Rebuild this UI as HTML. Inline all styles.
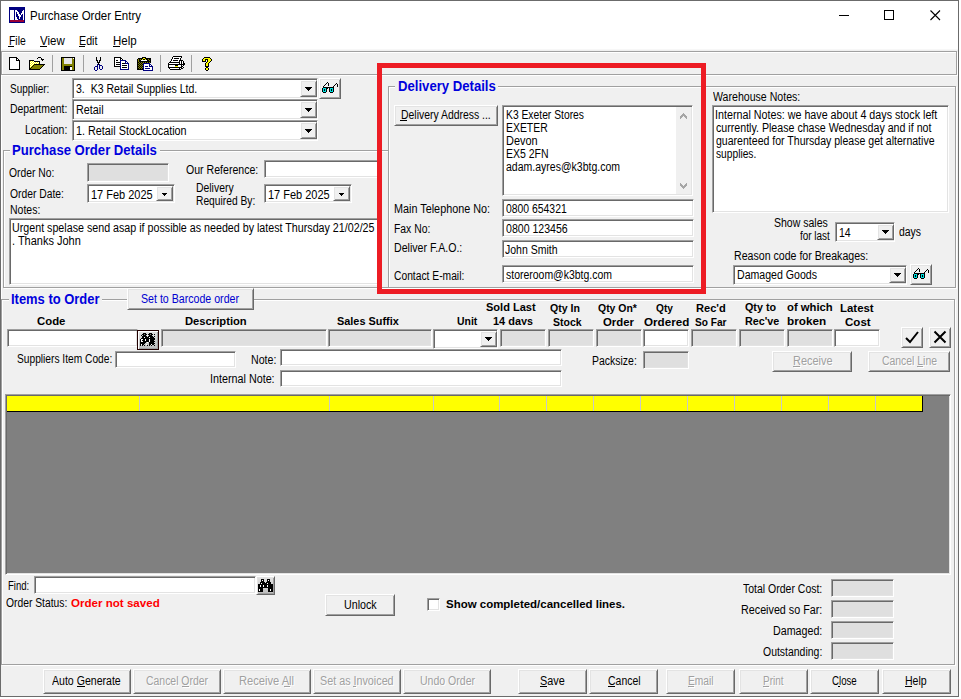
<!DOCTYPE html><html><head><meta charset='utf-8'><style>
html,body{margin:0;padding:0;width:961px;height:699px;overflow:hidden;background:#fff}
body>div,body>svg,body>span{position:absolute}
.sk{box-sizing:border-box;border:1px solid;border-color:#a0a0a0 #fff #fff #a0a0a0;box-shadow:inset 1px 1px 0 #696969,inset -1px -1px 0 #e3e3e3}
.rz{box-sizing:border-box;border:1px solid;border-color:#fff #696969 #696969 #fff;box-shadow:inset 1px 1px 0 #e3e3e3,inset -1px -1px 0 #a0a0a0}
.t{font-family:'Liberation Sans',sans-serif;white-space:pre;transform-origin:0 0}
</style></head><body><div style="left:0px;top:0px;width:961px;height:699px;background:#fff"></div>
<div style="left:0px;top:0px;width:959px;height:697px;background:#f0f0f0;border:1px solid #6b6b6b;box-sizing:border-box"></div>
<div style="left:1px;top:1px;width:957px;height:48px;background:#fff"></div>
<div style="left:1px;top:49px;width:957px;height:1px;background:#f7f7f7"></div>
<svg style="left:9px;top:7px" width="16" height="16" shape-rendering="crispEdges"><rect x="0" y="0" width="16" height="1" fill="#000080"/><rect x="0" y="1" width="16" height="1" fill="#000080"/><rect x="0" y="2" width="16" height="1" fill="#000080"/><rect x="0" y="3" width="1" height="1" fill="#000080"/><rect x="1" y="3" width="4" height="1" fill="#fff"/><rect x="5" y="3" width="1" height="1" fill="#000080"/><rect x="6" y="3" width="2" height="1" fill="#fff"/><rect x="8" y="3" width="6" height="1" fill="#000080"/><rect x="14" y="3" width="1" height="1" fill="#fff"/><rect x="15" y="3" width="1" height="1" fill="#000080"/><rect x="0" y="4" width="1" height="1" fill="#000080"/><rect x="1" y="4" width="4" height="1" fill="#fff"/><rect x="5" y="4" width="1" height="1" fill="#000080"/><rect x="6" y="4" width="3" height="1" fill="#fff"/><rect x="9" y="4" width="4" height="1" fill="#000080"/><rect x="13" y="4" width="2" height="1" fill="#fff"/><rect x="15" y="4" width="1" height="1" fill="#000080"/><rect x="0" y="5" width="1" height="1" fill="#000080"/><rect x="1" y="5" width="4" height="1" fill="#fff"/><rect x="5" y="5" width="1" height="1" fill="#000080"/><rect x="6" y="5" width="1" height="1" fill="#fff"/><rect x="7" y="5" width="1" height="1" fill="#000080"/><rect x="8" y="5" width="2" height="1" fill="#fff"/><rect x="10" y="5" width="3" height="1" fill="#000080"/><rect x="13" y="5" width="2" height="1" fill="#fff"/><rect x="15" y="5" width="1" height="1" fill="#000080"/><rect x="0" y="6" width="1" height="1" fill="#000080"/><rect x="1" y="6" width="4" height="1" fill="#fff"/><rect x="5" y="6" width="1" height="1" fill="#000080"/><rect x="6" y="6" width="1" height="1" fill="#fff"/><rect x="7" y="6" width="1" height="1" fill="#000080"/><rect x="8" y="6" width="2" height="1" fill="#fff"/><rect x="10" y="6" width="2" height="1" fill="#000080"/><rect x="12" y="6" width="3" height="1" fill="#fff"/><rect x="15" y="6" width="1" height="1" fill="#000080"/><rect x="0" y="7" width="1" height="1" fill="#000080"/><rect x="1" y="7" width="4" height="1" fill="#fff"/><rect x="5" y="7" width="1" height="1" fill="#000080"/><rect x="6" y="7" width="1" height="1" fill="#fff"/><rect x="7" y="7" width="2" height="1" fill="#000080"/><rect x="9" y="7" width="2" height="1" fill="#fff"/><rect x="11" y="7" width="1" height="1" fill="#000080"/><rect x="12" y="7" width="1" height="1" fill="#fff"/><rect x="13" y="7" width="1" height="1" fill="#000080"/><rect x="14" y="7" width="1" height="1" fill="#fff"/><rect x="15" y="7" width="1" height="1" fill="#000080"/><rect x="0" y="8" width="1" height="1" fill="#000080"/><rect x="1" y="8" width="4" height="1" fill="#fff"/><rect x="5" y="8" width="1" height="1" fill="#000080"/><rect x="6" y="8" width="1" height="1" fill="#fff"/><rect x="7" y="8" width="2" height="1" fill="#000080"/><rect x="9" y="8" width="3" height="1" fill="#fff"/><rect x="12" y="8" width="2" height="1" fill="#000080"/><rect x="14" y="8" width="1" height="1" fill="#fff"/><rect x="15" y="8" width="1" height="1" fill="#000080"/><rect x="0" y="9" width="1" height="1" fill="#000080"/><rect x="1" y="9" width="4" height="1" fill="#fff"/><rect x="5" y="9" width="1" height="1" fill="#000080"/><rect x="6" y="9" width="1" height="1" fill="#fff"/><rect x="7" y="9" width="3" height="1" fill="#000080"/><rect x="10" y="9" width="2" height="1" fill="#fff"/><rect x="12" y="9" width="2" height="1" fill="#000080"/><rect x="14" y="9" width="1" height="1" fill="#fff"/><rect x="15" y="9" width="1" height="1" fill="#000080"/><rect x="0" y="10" width="1" height="1" fill="#000080"/><rect x="1" y="10" width="4" height="1" fill="#fff"/><rect x="5" y="10" width="1" height="1" fill="#000080"/><rect x="6" y="10" width="2" height="1" fill="#fff"/><rect x="8" y="10" width="2" height="1" fill="#000080"/><rect x="10" y="10" width="1" height="1" fill="#fff"/><rect x="11" y="10" width="3" height="1" fill="#000080"/><rect x="14" y="10" width="1" height="1" fill="#fff"/><rect x="15" y="10" width="1" height="1" fill="#000080"/><rect x="0" y="11" width="1" height="1" fill="#000080"/><rect x="1" y="11" width="4" height="1" fill="#fff"/><rect x="5" y="11" width="1" height="1" fill="#000080"/><rect x="6" y="11" width="2" height="1" fill="#fff"/><rect x="8" y="11" width="2" height="1" fill="#000080"/><rect x="10" y="11" width="1" height="1" fill="#fff"/><rect x="11" y="11" width="3" height="1" fill="#000080"/><rect x="14" y="11" width="1" height="1" fill="#fff"/><rect x="15" y="11" width="1" height="1" fill="#000080"/><rect x="0" y="12" width="1" height="1" fill="#000080"/><rect x="1" y="12" width="4" height="1" fill="#fff"/><rect x="5" y="12" width="1" height="1" fill="#000080"/><rect x="6" y="12" width="3" height="1" fill="#fff"/><rect x="9" y="12" width="5" height="1" fill="#000080"/><rect x="14" y="12" width="1" height="1" fill="#fff"/><rect x="15" y="12" width="1" height="1" fill="#000080"/><rect x="0" y="13" width="1" height="1" fill="#000080"/><rect x="1" y="13" width="14" height="1" fill="#9a0036"/><rect x="15" y="13" width="1" height="1" fill="#000080"/><rect x="0" y="14" width="1" height="1" fill="#000080"/><rect x="1" y="14" width="14" height="1" fill="#9a0036"/><rect x="15" y="14" width="1" height="1" fill="#000080"/><rect x="0" y="15" width="16" height="1" fill="#000080"/></svg>
<span class="t" style="top:10px;font-size:12px;line-height:12px;color:#000;left:30.00px;transform:scaleX(0.9565);">Purchase Order Entry</span>
<div style="left:839px;top:15px;width:10px;height:1px;background:#000"></div>
<div style="left:884px;top:10px;width:10px;height:10px;border:1px solid #000;box-sizing:border-box"></div>
<svg style="left:930px;top:10px" width="11" height="11"><path d="M0.5 0.5L10 10M10 0.5L0.5 10" stroke="#000" stroke-width="1.1"/></svg>
<span class="t" style="top:35px;font-size:12px;line-height:12px;color:#000;left:9.00px;transform:scaleX(0.8646);">File</span>
<div style="left:8px;top:46px;width:6px;height:1px;background:#000"></div>
<span class="t" style="top:35px;font-size:12px;line-height:12px;color:#000;left:40.00px;transform:scaleX(0.9569);">View</span>
<div style="left:40px;top:46px;width:7px;height:1px;background:#000"></div>
<span class="t" style="top:35px;font-size:12px;line-height:12px;color:#000;left:79.00px;transform:scaleX(0.8902);">Edit</span>
<div style="left:79px;top:46px;width:6px;height:1px;background:#000"></div>
<span class="t" style="top:35px;font-size:12px;line-height:12px;color:#000;left:113.00px;transform:scaleX(0.9598);">Help</span>
<div style="left:113px;top:46px;width:7px;height:1px;background:#000"></div>
<div style="left:2px;top:52px;width:956px;height:24px;border:1px solid #fff;box-sizing:border-box"></div>
<div style="left:1px;top:51px;width:956px;height:24px;border:1px solid #a0a0a0;box-sizing:border-box"></div>
<div style="left:52px;top:55px;width:1px;height:17px;background:#a0a0a0"></div>
<div style="left:83px;top:55px;width:1px;height:17px;background:#a0a0a0"></div>
<div style="left:160px;top:55px;width:1px;height:17px;background:#a0a0a0"></div>
<div style="left:191px;top:55px;width:1px;height:17px;background:#a0a0a0"></div>
<svg style="left:9px;top:57px" width="11" height="13" shape-rendering="crispEdges"><rect x="0" y="0" width="8" height="1" fill="#000"/><rect x="0" y="1" width="1" height="1" fill="#000"/><rect x="1" y="1" width="6" height="1" fill="#fff"/><rect x="7" y="1" width="2" height="1" fill="#000"/><rect x="0" y="2" width="1" height="1" fill="#000"/><rect x="1" y="2" width="6" height="1" fill="#fff"/><rect x="7" y="2" width="1" height="1" fill="#000"/><rect x="8" y="2" width="1" height="1" fill="#fff"/><rect x="9" y="2" width="1" height="1" fill="#000"/><rect x="0" y="3" width="1" height="1" fill="#000"/><rect x="1" y="3" width="6" height="1" fill="#fff"/><rect x="7" y="3" width="4" height="1" fill="#000"/><rect x="0" y="4" width="1" height="1" fill="#000"/><rect x="1" y="4" width="9" height="1" fill="#fff"/><rect x="10" y="4" width="1" height="1" fill="#000"/><rect x="0" y="5" width="1" height="1" fill="#000"/><rect x="1" y="5" width="9" height="1" fill="#fff"/><rect x="10" y="5" width="1" height="1" fill="#000"/><rect x="0" y="6" width="1" height="1" fill="#000"/><rect x="1" y="6" width="9" height="1" fill="#fff"/><rect x="10" y="6" width="1" height="1" fill="#000"/><rect x="0" y="7" width="1" height="1" fill="#000"/><rect x="1" y="7" width="9" height="1" fill="#fff"/><rect x="10" y="7" width="1" height="1" fill="#000"/><rect x="0" y="8" width="1" height="1" fill="#000"/><rect x="1" y="8" width="9" height="1" fill="#fff"/><rect x="10" y="8" width="1" height="1" fill="#000"/><rect x="0" y="9" width="1" height="1" fill="#000"/><rect x="1" y="9" width="9" height="1" fill="#fff"/><rect x="10" y="9" width="1" height="1" fill="#000"/><rect x="0" y="10" width="1" height="1" fill="#000"/><rect x="1" y="10" width="9" height="1" fill="#fff"/><rect x="10" y="10" width="1" height="1" fill="#000"/><rect x="0" y="11" width="1" height="1" fill="#000"/><rect x="1" y="11" width="9" height="1" fill="#fff"/><rect x="10" y="11" width="1" height="1" fill="#000"/><rect x="0" y="12" width="11" height="1" fill="#000"/></svg><svg style="left:29px;top:57px" width="16" height="13" shape-rendering="crispEdges"><rect x="9" y="0" width="3" height="1" fill="#000"/><rect x="8" y="1" width="1" height="1" fill="#000"/><rect x="12" y="1" width="1" height="1" fill="#000"/><rect x="12" y="2" width="3" height="1" fill="#000"/><rect x="0" y="3" width="5" height="1" fill="#000"/><rect x="13" y="3" width="1" height="1" fill="#000"/><rect x="0" y="4" width="1" height="1" fill="#000"/><rect x="1" y="4" width="1" height="1" fill="#ffff00"/><rect x="2" y="4" width="1" height="1" fill="#fff"/><rect x="3" y="4" width="1" height="1" fill="#ffff00"/><rect x="4" y="4" width="1" height="1" fill="#fff"/><rect x="5" y="4" width="6" height="1" fill="#000"/><rect x="0" y="5" width="1" height="1" fill="#000"/><rect x="1" y="5" width="1" height="1" fill="#fff"/><rect x="2" y="5" width="1" height="1" fill="#ffff00"/><rect x="3" y="5" width="1" height="1" fill="#fff"/><rect x="4" y="5" width="1" height="1" fill="#ffff00"/><rect x="5" y="5" width="1" height="1" fill="#fff"/><rect x="6" y="5" width="1" height="1" fill="#ffff00"/><rect x="7" y="5" width="1" height="1" fill="#fff"/><rect x="8" y="5" width="1" height="1" fill="#ffff00"/><rect x="9" y="5" width="1" height="1" fill="#fff"/><rect x="10" y="5" width="1" height="1" fill="#000"/><rect x="0" y="6" width="1" height="1" fill="#000"/><rect x="1" y="6" width="1" height="1" fill="#ffff00"/><rect x="2" y="6" width="1" height="1" fill="#fff"/><rect x="3" y="6" width="1" height="1" fill="#ffff00"/><rect x="4" y="6" width="1" height="1" fill="#fff"/><rect x="5" y="6" width="1" height="1" fill="#ffff00"/><rect x="6" y="6" width="1" height="1" fill="#fff"/><rect x="7" y="6" width="1" height="1" fill="#ffff00"/><rect x="8" y="6" width="1" height="1" fill="#fff"/><rect x="9" y="6" width="1" height="1" fill="#ffff00"/><rect x="10" y="6" width="1" height="1" fill="#000"/><rect x="0" y="7" width="1" height="1" fill="#000"/><rect x="1" y="7" width="1" height="1" fill="#fff"/><rect x="2" y="7" width="1" height="1" fill="#ffff00"/><rect x="3" y="7" width="1" height="1" fill="#fff"/><rect x="4" y="7" width="1" height="1" fill="#ffff00"/><rect x="5" y="7" width="11" height="1" fill="#000"/><rect x="0" y="8" width="1" height="1" fill="#000"/><rect x="1" y="8" width="1" height="1" fill="#ffff00"/><rect x="2" y="8" width="1" height="1" fill="#fff"/><rect x="3" y="8" width="1" height="1" fill="#ffff00"/><rect x="4" y="8" width="1" height="1" fill="#000"/><rect x="5" y="8" width="9" height="1" fill="#808000"/><rect x="14" y="8" width="1" height="1" fill="#000"/><rect x="0" y="9" width="1" height="1" fill="#000"/><rect x="1" y="9" width="1" height="1" fill="#fff"/><rect x="2" y="9" width="1" height="1" fill="#ffff00"/><rect x="3" y="9" width="1" height="1" fill="#000"/><rect x="4" y="9" width="9" height="1" fill="#808000"/><rect x="13" y="9" width="1" height="1" fill="#000"/><rect x="0" y="10" width="1" height="1" fill="#000"/><rect x="1" y="10" width="1" height="1" fill="#ffff00"/><rect x="2" y="10" width="1" height="1" fill="#000"/><rect x="3" y="10" width="9" height="1" fill="#808000"/><rect x="12" y="10" width="1" height="1" fill="#000"/><rect x="0" y="11" width="2" height="1" fill="#000"/><rect x="2" y="11" width="9" height="1" fill="#808000"/><rect x="11" y="11" width="1" height="1" fill="#000"/><rect x="0" y="12" width="11" height="1" fill="#000"/></svg><svg style="left:61px;top:57px" width="14" height="14" shape-rendering="crispEdges"><rect x="0" y="0" width="14" height="1" fill="#000"/><rect x="0" y="1" width="1" height="1" fill="#000"/><rect x="1" y="1" width="2" height="1" fill="#808000"/><rect x="3" y="1" width="8" height="1" fill="#e6e6e6"/><rect x="11" y="1" width="1" height="1" fill="#808000"/><rect x="12" y="1" width="1" height="1" fill="#fff"/><rect x="13" y="1" width="1" height="1" fill="#000"/><rect x="0" y="2" width="1" height="1" fill="#000"/><rect x="1" y="2" width="2" height="1" fill="#808000"/><rect x="3" y="2" width="8" height="1" fill="#e6e6e6"/><rect x="11" y="2" width="2" height="1" fill="#808000"/><rect x="13" y="2" width="1" height="1" fill="#000"/><rect x="0" y="3" width="1" height="1" fill="#000"/><rect x="1" y="3" width="2" height="1" fill="#808000"/><rect x="3" y="3" width="8" height="1" fill="#e6e6e6"/><rect x="11" y="3" width="2" height="1" fill="#808000"/><rect x="13" y="3" width="1" height="1" fill="#000"/><rect x="0" y="4" width="1" height="1" fill="#000"/><rect x="1" y="4" width="2" height="1" fill="#808000"/><rect x="3" y="4" width="8" height="1" fill="#e6e6e6"/><rect x="11" y="4" width="2" height="1" fill="#808000"/><rect x="13" y="4" width="1" height="1" fill="#000"/><rect x="0" y="5" width="1" height="1" fill="#000"/><rect x="1" y="5" width="2" height="1" fill="#808000"/><rect x="3" y="5" width="8" height="1" fill="#e6e6e6"/><rect x="11" y="5" width="2" height="1" fill="#808000"/><rect x="13" y="5" width="1" height="1" fill="#000"/><rect x="0" y="6" width="1" height="1" fill="#000"/><rect x="1" y="6" width="2" height="1" fill="#808000"/><rect x="3" y="6" width="8" height="1" fill="#e6e6e6"/><rect x="11" y="6" width="2" height="1" fill="#808000"/><rect x="13" y="6" width="1" height="1" fill="#000"/><rect x="0" y="7" width="1" height="1" fill="#000"/><rect x="1" y="7" width="12" height="1" fill="#808000"/><rect x="13" y="7" width="1" height="1" fill="#000"/><rect x="0" y="8" width="1" height="1" fill="#000"/><rect x="1" y="8" width="12" height="1" fill="#808000"/><rect x="13" y="8" width="1" height="1" fill="#000"/><rect x="0" y="9" width="1" height="1" fill="#000"/><rect x="1" y="9" width="2" height="1" fill="#808000"/><rect x="3" y="9" width="8" height="1" fill="#000"/><rect x="11" y="9" width="2" height="1" fill="#808000"/><rect x="13" y="9" width="1" height="1" fill="#000"/><rect x="0" y="10" width="1" height="1" fill="#000"/><rect x="1" y="10" width="2" height="1" fill="#808000"/><rect x="3" y="10" width="6" height="1" fill="#000"/><rect x="9" y="10" width="2" height="1" fill="#fff"/><rect x="11" y="10" width="2" height="1" fill="#808000"/><rect x="13" y="10" width="1" height="1" fill="#000"/><rect x="0" y="11" width="1" height="1" fill="#000"/><rect x="1" y="11" width="2" height="1" fill="#808000"/><rect x="3" y="11" width="6" height="1" fill="#000"/><rect x="9" y="11" width="2" height="1" fill="#fff"/><rect x="11" y="11" width="2" height="1" fill="#808000"/><rect x="13" y="11" width="1" height="1" fill="#000"/><rect x="0" y="12" width="1" height="1" fill="#000"/><rect x="1" y="12" width="2" height="1" fill="#808000"/><rect x="3" y="12" width="6" height="1" fill="#000"/><rect x="9" y="12" width="2" height="1" fill="#fff"/><rect x="11" y="12" width="2" height="1" fill="#808000"/><rect x="13" y="12" width="1" height="1" fill="#000"/><rect x="0" y="13" width="14" height="1" fill="#000"/></svg><svg style="left:94px;top:57px" width="9" height="14" shape-rendering="crispEdges"><rect x="2" y="0" width="1" height="1" fill="#000"/><rect x="6" y="0" width="1" height="1" fill="#000"/><rect x="2" y="1" width="1" height="1" fill="#000"/><rect x="6" y="1" width="1" height="1" fill="#000"/><rect x="2" y="2" width="1" height="1" fill="#000"/><rect x="6" y="2" width="1" height="1" fill="#000"/><rect x="2" y="3" width="2" height="1" fill="#000"/><rect x="5" y="3" width="2" height="1" fill="#000"/><rect x="3" y="4" width="1" height="1" fill="#000"/><rect x="5" y="4" width="1" height="1" fill="#000"/><rect x="3" y="5" width="3" height="1" fill="#000"/><rect x="4" y="6" width="1" height="1" fill="#000"/><rect x="3" y="7" width="1" height="1" fill="#000080"/><rect x="4" y="7" width="1" height="1" fill="#000"/><rect x="5" y="7" width="1" height="1" fill="#000080"/><rect x="3" y="8" width="1" height="1" fill="#000080"/><rect x="5" y="8" width="3" height="1" fill="#000080"/><rect x="1" y="9" width="3" height="1" fill="#000080"/><rect x="5" y="9" width="1" height="1" fill="#000080"/><rect x="8" y="9" width="1" height="1" fill="#000080"/><rect x="0" y="10" width="1" height="1" fill="#000080"/><rect x="3" y="10" width="1" height="1" fill="#000080"/><rect x="5" y="10" width="1" height="1" fill="#000080"/><rect x="8" y="10" width="1" height="1" fill="#000080"/><rect x="0" y="11" width="1" height="1" fill="#000080"/><rect x="3" y="11" width="1" height="1" fill="#000080"/><rect x="5" y="11" width="1" height="1" fill="#000080"/><rect x="8" y="11" width="1" height="1" fill="#000080"/><rect x="0" y="12" width="1" height="1" fill="#000080"/><rect x="3" y="12" width="1" height="1" fill="#000080"/><rect x="6" y="12" width="2" height="1" fill="#000080"/><rect x="1" y="13" width="2" height="1" fill="#000080"/></svg><svg style="left:114px;top:57px" width="16" height="13" shape-rendering="crispEdges"><rect x="0" y="0" width="7" height="1" fill="#000"/><rect x="0" y="1" width="1" height="1" fill="#000"/><rect x="1" y="1" width="5" height="1" fill="#fff"/><rect x="6" y="1" width="2" height="1" fill="#000"/><rect x="0" y="2" width="1" height="1" fill="#000"/><rect x="1" y="2" width="5" height="1" fill="#fff"/><rect x="6" y="2" width="1" height="1" fill="#000"/><rect x="7" y="2" width="1" height="1" fill="#fff"/><rect x="8" y="2" width="1" height="1" fill="#000"/><rect x="0" y="3" width="1" height="1" fill="#000"/><rect x="1" y="3" width="1" height="1" fill="#fff"/><rect x="2" y="3" width="2" height="1" fill="#000"/><rect x="4" y="3" width="2" height="1" fill="#fff"/><rect x="6" y="3" width="6" height="1" fill="#000080"/><rect x="0" y="4" width="1" height="1" fill="#000"/><rect x="1" y="4" width="5" height="1" fill="#fff"/><rect x="6" y="4" width="1" height="1" fill="#000080"/><rect x="7" y="4" width="4" height="1" fill="#fff"/><rect x="11" y="4" width="2" height="1" fill="#000080"/><rect x="0" y="5" width="1" height="1" fill="#000"/><rect x="1" y="5" width="1" height="1" fill="#fff"/><rect x="2" y="5" width="4" height="1" fill="#000"/><rect x="6" y="5" width="1" height="1" fill="#000080"/><rect x="7" y="5" width="4" height="1" fill="#fff"/><rect x="11" y="5" width="1" height="1" fill="#000080"/><rect x="12" y="5" width="1" height="1" fill="#fff"/><rect x="13" y="5" width="1" height="1" fill="#000080"/><rect x="0" y="6" width="1" height="1" fill="#000"/><rect x="1" y="6" width="5" height="1" fill="#fff"/><rect x="6" y="6" width="1" height="1" fill="#000080"/><rect x="7" y="6" width="1" height="1" fill="#fff"/><rect x="8" y="6" width="3" height="1" fill="#000"/><rect x="11" y="6" width="4" height="1" fill="#000080"/><rect x="0" y="7" width="1" height="1" fill="#000"/><rect x="1" y="7" width="1" height="1" fill="#fff"/><rect x="2" y="7" width="4" height="1" fill="#000"/><rect x="6" y="7" width="1" height="1" fill="#000080"/><rect x="7" y="7" width="7" height="1" fill="#fff"/><rect x="14" y="7" width="1" height="1" fill="#000080"/><rect x="0" y="8" width="1" height="1" fill="#000"/><rect x="1" y="8" width="5" height="1" fill="#fff"/><rect x="6" y="8" width="1" height="1" fill="#000080"/><rect x="7" y="8" width="1" height="1" fill="#fff"/><rect x="8" y="8" width="5" height="1" fill="#000"/><rect x="13" y="8" width="1" height="1" fill="#fff"/><rect x="14" y="8" width="1" height="1" fill="#000080"/><rect x="0" y="9" width="6" height="1" fill="#000"/><rect x="6" y="9" width="1" height="1" fill="#000080"/><rect x="7" y="9" width="7" height="1" fill="#fff"/><rect x="14" y="9" width="1" height="1" fill="#000080"/><rect x="6" y="10" width="1" height="1" fill="#000080"/><rect x="7" y="10" width="1" height="1" fill="#fff"/><rect x="8" y="10" width="5" height="1" fill="#000"/><rect x="13" y="10" width="1" height="1" fill="#fff"/><rect x="14" y="10" width="1" height="1" fill="#000080"/><rect x="6" y="11" width="1" height="1" fill="#000080"/><rect x="7" y="11" width="7" height="1" fill="#fff"/><rect x="14" y="11" width="1" height="1" fill="#000080"/><rect x="6" y="12" width="9" height="1" fill="#000080"/></svg><svg style="left:137px;top:57px" width="16" height="14" shape-rendering="crispEdges"><rect x="5" y="0" width="4" height="1" fill="#000"/><rect x="1" y="1" width="5" height="1" fill="#000"/><rect x="6" y="1" width="2" height="1" fill="#ffff00"/><rect x="8" y="1" width="6" height="1" fill="#000"/><rect x="0" y="2" width="1" height="1" fill="#000"/><rect x="1" y="2" width="1" height="1" fill="#808000"/><rect x="2" y="2" width="1" height="1" fill="#000"/><rect x="3" y="2" width="1" height="1" fill="#808000"/><rect x="4" y="2" width="1" height="1" fill="#000"/><rect x="5" y="2" width="1" height="1" fill="#ffff00"/><rect x="6" y="2" width="2" height="1" fill="#000"/><rect x="8" y="2" width="1" height="1" fill="#ffff00"/><rect x="9" y="2" width="2" height="1" fill="#000"/><rect x="11" y="2" width="1" height="1" fill="#808000"/><rect x="12" y="2" width="2" height="1" fill="#000"/><rect x="0" y="3" width="1" height="1" fill="#000"/><rect x="1" y="3" width="1" height="1" fill="#808000"/><rect x="2" y="3" width="2" height="1" fill="#000"/><rect x="4" y="3" width="6" height="1" fill="#fff"/><rect x="10" y="3" width="2" height="1" fill="#000"/><rect x="12" y="3" width="1" height="1" fill="#808000"/><rect x="13" y="3" width="1" height="1" fill="#000"/><rect x="0" y="4" width="1" height="1" fill="#000"/><rect x="1" y="4" width="1" height="1" fill="#808000"/><rect x="2" y="4" width="12" height="1" fill="#000"/><rect x="0" y="5" width="2" height="1" fill="#000"/><rect x="2" y="5" width="1" height="1" fill="#808000"/><rect x="3" y="5" width="1" height="1" fill="#000"/><rect x="4" y="5" width="1" height="1" fill="#808000"/><rect x="5" y="5" width="1" height="1" fill="#000"/><rect x="6" y="5" width="1" height="1" fill="#808000"/><rect x="7" y="5" width="1" height="1" fill="#000"/><rect x="8" y="5" width="1" height="1" fill="#808000"/><rect x="9" y="5" width="1" height="1" fill="#000"/><rect x="10" y="5" width="1" height="1" fill="#808000"/><rect x="11" y="5" width="1" height="1" fill="#000"/><rect x="12" y="5" width="1" height="1" fill="#808000"/><rect x="13" y="5" width="1" height="1" fill="#000"/><rect x="0" y="6" width="1" height="1" fill="#000"/><rect x="1" y="6" width="1" height="1" fill="#808000"/><rect x="2" y="6" width="1" height="1" fill="#000"/><rect x="3" y="6" width="1" height="1" fill="#808000"/><rect x="4" y="6" width="1" height="1" fill="#000"/><rect x="5" y="6" width="1" height="1" fill="#808000"/><rect x="6" y="6" width="7" height="1" fill="#000080"/><rect x="0" y="7" width="2" height="1" fill="#000"/><rect x="2" y="7" width="1" height="1" fill="#808000"/><rect x="3" y="7" width="1" height="1" fill="#000"/><rect x="4" y="7" width="1" height="1" fill="#808000"/><rect x="5" y="7" width="1" height="1" fill="#000"/><rect x="6" y="7" width="1" height="1" fill="#000080"/><rect x="7" y="7" width="5" height="1" fill="#fff"/><rect x="12" y="7" width="2" height="1" fill="#000080"/><rect x="0" y="8" width="1" height="1" fill="#000"/><rect x="1" y="8" width="1" height="1" fill="#808000"/><rect x="2" y="8" width="1" height="1" fill="#000"/><rect x="3" y="8" width="1" height="1" fill="#808000"/><rect x="4" y="8" width="1" height="1" fill="#000"/><rect x="5" y="8" width="1" height="1" fill="#808000"/><rect x="6" y="8" width="1" height="1" fill="#000080"/><rect x="7" y="8" width="5" height="1" fill="#fff"/><rect x="12" y="8" width="1" height="1" fill="#000080"/><rect x="13" y="8" width="1" height="1" fill="#fff"/><rect x="14" y="8" width="1" height="1" fill="#000080"/><rect x="0" y="9" width="2" height="1" fill="#000"/><rect x="2" y="9" width="1" height="1" fill="#808000"/><rect x="3" y="9" width="1" height="1" fill="#000"/><rect x="4" y="9" width="1" height="1" fill="#808000"/><rect x="5" y="9" width="1" height="1" fill="#000"/><rect x="6" y="9" width="1" height="1" fill="#000080"/><rect x="7" y="9" width="1" height="1" fill="#fff"/><rect x="8" y="9" width="3" height="1" fill="#000080"/><rect x="11" y="9" width="1" height="1" fill="#fff"/><rect x="12" y="9" width="4" height="1" fill="#000080"/><rect x="0" y="10" width="1" height="1" fill="#000"/><rect x="1" y="10" width="1" height="1" fill="#808000"/><rect x="2" y="10" width="1" height="1" fill="#000"/><rect x="3" y="10" width="1" height="1" fill="#808000"/><rect x="4" y="10" width="1" height="1" fill="#000"/><rect x="5" y="10" width="1" height="1" fill="#808000"/><rect x="6" y="10" width="1" height="1" fill="#000080"/><rect x="7" y="10" width="8" height="1" fill="#fff"/><rect x="15" y="10" width="1" height="1" fill="#000080"/><rect x="0" y="11" width="2" height="1" fill="#000"/><rect x="2" y="11" width="1" height="1" fill="#808000"/><rect x="3" y="11" width="1" height="1" fill="#000"/><rect x="4" y="11" width="1" height="1" fill="#808000"/><rect x="5" y="11" width="1" height="1" fill="#000"/><rect x="6" y="11" width="1" height="1" fill="#000080"/><rect x="7" y="11" width="1" height="1" fill="#fff"/><rect x="8" y="11" width="5" height="1" fill="#000080"/><rect x="13" y="11" width="2" height="1" fill="#fff"/><rect x="15" y="11" width="1" height="1" fill="#000080"/><rect x="0" y="12" width="6" height="1" fill="#000"/><rect x="6" y="12" width="1" height="1" fill="#000080"/><rect x="7" y="12" width="8" height="1" fill="#fff"/><rect x="15" y="12" width="1" height="1" fill="#000080"/><rect x="6" y="13" width="10" height="1" fill="#000080"/></svg><svg style="left:168px;top:56px" width="17" height="14" shape-rendering="crispEdges"><rect x="5" y="0" width="9" height="1" fill="#000"/><rect x="4" y="1" width="1" height="1" fill="#000"/><rect x="5" y="1" width="8" height="1" fill="#fff"/><rect x="13" y="1" width="1" height="1" fill="#000"/><rect x="4" y="2" width="1" height="1" fill="#000"/><rect x="5" y="2" width="1" height="1" fill="#fff"/><rect x="6" y="2" width="5" height="1" fill="#000"/><rect x="11" y="2" width="1" height="1" fill="#fff"/><rect x="12" y="2" width="1" height="1" fill="#000"/><rect x="3" y="3" width="1" height="1" fill="#000"/><rect x="4" y="3" width="8" height="1" fill="#fff"/><rect x="12" y="3" width="1" height="1" fill="#000"/><rect x="3" y="4" width="1" height="1" fill="#000"/><rect x="4" y="4" width="1" height="1" fill="#fff"/><rect x="5" y="4" width="5" height="1" fill="#000"/><rect x="10" y="4" width="1" height="1" fill="#fff"/><rect x="11" y="4" width="4" height="1" fill="#000"/><rect x="2" y="5" width="1" height="1" fill="#000"/><rect x="3" y="5" width="8" height="1" fill="#fff"/><rect x="11" y="5" width="1" height="1" fill="#000"/><rect x="12" y="5" width="1" height="1" fill="#fff"/><rect x="13" y="5" width="1" height="1" fill="#000"/><rect x="14" y="5" width="1" height="1" fill="#fff"/><rect x="15" y="5" width="1" height="1" fill="#000"/><rect x="1" y="6" width="11" height="1" fill="#000"/><rect x="12" y="6" width="1" height="1" fill="#fff"/><rect x="13" y="6" width="1" height="1" fill="#000"/><rect x="14" y="6" width="1" height="1" fill="#fff"/><rect x="15" y="6" width="1" height="1" fill="#000"/><rect x="0" y="7" width="1" height="1" fill="#000"/><rect x="1" y="7" width="10" height="1" fill="#fff"/><rect x="11" y="7" width="1" height="1" fill="#000"/><rect x="12" y="7" width="1" height="1" fill="#fff"/><rect x="13" y="7" width="1" height="1" fill="#000"/><rect x="14" y="7" width="1" height="1" fill="#fff"/><rect x="15" y="7" width="2" height="1" fill="#000"/><rect x="0" y="8" width="17" height="1" fill="#000"/><rect x="0" y="9" width="1" height="1" fill="#000"/><rect x="1" y="9" width="6" height="1" fill="#fff"/><rect x="7" y="9" width="3" height="1" fill="#000"/><rect x="10" y="9" width="3" height="1" fill="#fff"/><rect x="13" y="9" width="1" height="1" fill="#000"/><rect x="14" y="9" width="1" height="1" fill="#fff"/><rect x="15" y="9" width="1" height="1" fill="#000"/><rect x="0" y="10" width="1" height="1" fill="#000"/><rect x="1" y="10" width="6" height="1" fill="#fff"/><rect x="7" y="10" width="3" height="1" fill="#ffff00"/><rect x="10" y="10" width="3" height="1" fill="#fff"/><rect x="13" y="10" width="2" height="1" fill="#000"/><rect x="15" y="10" width="1" height="1" fill="#fff"/><rect x="0" y="11" width="14" height="1" fill="#000"/><rect x="14" y="11" width="1" height="1" fill="#fff"/><rect x="15" y="11" width="1" height="1" fill="#000"/><rect x="1" y="12" width="1" height="1" fill="#000"/><rect x="2" y="12" width="9" height="1" fill="#fff"/><rect x="11" y="12" width="1" height="1" fill="#000"/><rect x="12" y="12" width="1" height="1" fill="#fff"/><rect x="13" y="12" width="2" height="1" fill="#000"/><rect x="2" y="13" width="11" height="1" fill="#000"/></svg><svg style="left:202px;top:57px" width="10" height="14" shape-rendering="crispEdges"><rect x="2" y="0" width="6" height="1" fill="#000"/><rect x="1" y="1" width="1" height="1" fill="#000"/><rect x="2" y="1" width="6" height="1" fill="#ffff00"/><rect x="8" y="1" width="1" height="1" fill="#000"/><rect x="0" y="2" width="1" height="1" fill="#000"/><rect x="1" y="2" width="2" height="1" fill="#ffff00"/><rect x="3" y="2" width="3" height="1" fill="#000"/><rect x="6" y="2" width="3" height="1" fill="#ffff00"/><rect x="9" y="2" width="1" height="1" fill="#000"/><rect x="0" y="3" width="1" height="1" fill="#000"/><rect x="1" y="3" width="2" height="1" fill="#ffff00"/><rect x="3" y="3" width="1" height="1" fill="#000"/><rect x="4" y="3" width="1" height="1" fill="#fff"/><rect x="5" y="3" width="1" height="1" fill="#000"/><rect x="6" y="3" width="3" height="1" fill="#ffff00"/><rect x="9" y="3" width="1" height="1" fill="#000"/><rect x="0" y="4" width="4" height="1" fill="#000"/><rect x="5" y="4" width="1" height="1" fill="#000"/><rect x="6" y="4" width="2" height="1" fill="#ffff00"/><rect x="8" y="4" width="1" height="1" fill="#000"/><rect x="4" y="5" width="1" height="1" fill="#000"/><rect x="5" y="5" width="2" height="1" fill="#ffff00"/><rect x="7" y="5" width="1" height="1" fill="#000"/><rect x="3" y="6" width="1" height="1" fill="#000"/><rect x="4" y="6" width="2" height="1" fill="#ffff00"/><rect x="6" y="6" width="1" height="1" fill="#000"/><rect x="3" y="7" width="1" height="1" fill="#000"/><rect x="4" y="7" width="2" height="1" fill="#ffff00"/><rect x="6" y="7" width="1" height="1" fill="#000"/><rect x="3" y="8" width="1" height="1" fill="#000"/><rect x="4" y="8" width="2" height="1" fill="#ffff00"/><rect x="6" y="8" width="1" height="1" fill="#000"/><rect x="3" y="9" width="4" height="1" fill="#000"/><rect x="4" y="10" width="2" height="1" fill="#000"/><rect x="3" y="11" width="1" height="1" fill="#000"/><rect x="4" y="11" width="2" height="1" fill="#ffff00"/><rect x="6" y="11" width="1" height="1" fill="#000"/><rect x="3" y="12" width="1" height="1" fill="#000"/><rect x="4" y="12" width="2" height="1" fill="#ffff00"/><rect x="6" y="12" width="1" height="1" fill="#000"/><rect x="4" y="13" width="2" height="1" fill="#000"/></svg>
<div style="left:1px;top:75px;width:1px;height:224px;background:#fff"></div>
<span class="t" style="top:83px;font-size:12px;line-height:12px;color:#000;left:10.00px;transform:scaleX(0.8293);">Supplier:</span>
<span class="t" style="top:103px;font-size:12px;line-height:12px;color:#000;left:10.00px;transform:scaleX(0.8676);">Department:</span>
<span class="t" style="top:124px;font-size:12px;line-height:12px;color:#000;left:25.00px;transform:scaleX(0.8683);">Location:</span>
<div class="sk" style="left:72px;top:78px;width:246px;height:21px;background:#fff"></div>
<div class="rz" style="left:300px;top:80px;width:17px;height:17px;background:#f0f0f0"></div>
<svg style="left:305px;top:87px" width="7" height="4"><path d="M0 0h7v1h-1v1h-1v1h-1v1h-1v-1h-1v-1h-1v-1h-1z" fill="#000"/></svg>
<div class="sk" style="left:72px;top:99px;width:246px;height:21px;background:#fff"></div>
<div class="rz" style="left:300px;top:101px;width:17px;height:17px;background:#f0f0f0"></div>
<svg style="left:305px;top:108px" width="7" height="4"><path d="M0 0h7v1h-1v1h-1v1h-1v1h-1v-1h-1v-1h-1v-1h-1z" fill="#000"/></svg>
<div class="sk" style="left:72px;top:120px;width:246px;height:21px;background:#fff"></div>
<div class="rz" style="left:300px;top:122px;width:17px;height:17px;background:#f0f0f0"></div>
<svg style="left:305px;top:129px" width="7" height="4"><path d="M0 0h7v1h-1v1h-1v1h-1v1h-1v-1h-1v-1h-1v-1h-1z" fill="#000"/></svg>
<span class="t" style="top:83px;font-size:12px;line-height:12px;color:#000;left:76.00px;transform:scaleX(0.8784);">3.  K3 Retail Supplies Ltd.</span>
<span class="t" style="top:104px;font-size:12px;line-height:12px;color:#000;left:76.00px;transform:scaleX(0.8996);">Retail</span>
<span class="t" style="top:125px;font-size:12px;line-height:12px;color:#000;left:76.00px;transform:scaleX(0.9012);">1. Retail StockLocation</span>
<div class="rz" style="left:319px;top:78px;width:22px;height:21px;background:#f0f0f0"></div>
<svg style="left:322px;top:82px" width="17" height="11" shape-rendering="crispEdges"><rect x="5" y="0" width="1" height="1" fill="#000"/><rect x="4" y="1" width="1" height="1" fill="#000"/><rect x="6" y="1" width="1" height="1" fill="#000"/><rect x="14" y="1" width="1" height="1" fill="#000"/><rect x="3" y="2" width="1" height="1" fill="#000"/><rect x="6" y="2" width="1" height="1" fill="#000"/><rect x="13" y="2" width="1" height="1" fill="#000"/><rect x="15" y="2" width="1" height="1" fill="#000"/><rect x="2" y="3" width="1" height="1" fill="#000"/><rect x="6" y="3" width="1" height="1" fill="#000"/><rect x="12" y="3" width="1" height="1" fill="#000"/><rect x="15" y="3" width="1" height="1" fill="#000"/><rect x="1" y="4" width="1" height="1" fill="#000"/><rect x="11" y="4" width="1" height="1" fill="#000"/><rect x="15" y="4" width="1" height="1" fill="#000"/><rect x="1" y="5" width="11" height="1" fill="#000"/><rect x="0" y="6" width="1" height="1" fill="#000"/><rect x="1" y="6" width="3" height="1" fill="#00e0e0"/><rect x="4" y="6" width="2" height="1" fill="#000"/><rect x="7" y="6" width="1" height="1" fill="#000"/><rect x="8" y="6" width="3" height="1" fill="#00e0e0"/><rect x="11" y="6" width="1" height="1" fill="#000"/><rect x="0" y="7" width="1" height="1" fill="#000"/><rect x="1" y="7" width="1" height="1" fill="#00e0e0"/><rect x="2" y="7" width="1" height="1" fill="#000"/><rect x="3" y="7" width="1" height="1" fill="#00e0e0"/><rect x="4" y="7" width="1" height="1" fill="#000"/><rect x="7" y="7" width="1" height="1" fill="#000"/><rect x="8" y="7" width="1" height="1" fill="#00e0e0"/><rect x="9" y="7" width="1" height="1" fill="#000"/><rect x="10" y="7" width="1" height="1" fill="#00e0e0"/><rect x="11" y="7" width="1" height="1" fill="#000"/><rect x="0" y="8" width="1" height="1" fill="#000"/><rect x="1" y="8" width="1" height="1" fill="#00e0e0"/><rect x="2" y="8" width="1" height="1" fill="#000"/><rect x="3" y="8" width="1" height="1" fill="#00e0e0"/><rect x="4" y="8" width="1" height="1" fill="#000"/><rect x="7" y="8" width="1" height="1" fill="#000"/><rect x="8" y="8" width="1" height="1" fill="#00e0e0"/><rect x="9" y="8" width="1" height="1" fill="#000"/><rect x="10" y="8" width="1" height="1" fill="#00e0e0"/><rect x="11" y="8" width="1" height="1" fill="#000"/><rect x="0" y="9" width="1" height="1" fill="#000"/><rect x="1" y="9" width="3" height="1" fill="#00e0e0"/><rect x="4" y="9" width="1" height="1" fill="#000"/><rect x="7" y="9" width="1" height="1" fill="#000"/><rect x="8" y="9" width="3" height="1" fill="#00e0e0"/><rect x="11" y="9" width="1" height="1" fill="#000"/><rect x="1" y="10" width="3" height="1" fill="#000"/><rect x="8" y="10" width="3" height="1" fill="#000"/></svg>
<div style="left:4px;top:151px;width:386px;height:138px;border:1px solid #fff;box-sizing:border-box"></div>
<div style="left:3px;top:150px;width:386px;height:138px;border:1px solid #a0a0a0;box-sizing:border-box"></div>
<div style="left:10px;top:145px;width:150px;height:8px;background:#f0f0f0"></div>
<span class="t" style="top:143px;font-size:14px;line-height:14px;color:#0000dd;font-weight:bold;left:12.00px;transform:scaleX(0.9351);">Purchase Order Details</span>
<span class="t" style="top:167px;font-size:12px;line-height:12px;color:#000;left:9.40px;transform:scaleX(0.8596);">Order No:</span>
<div class="sk" style="left:87px;top:163px;width:82px;height:19px;background:#dfdfdf"></div>
<span class="t" style="top:164px;font-size:12px;line-height:12px;color:#000;left:186.00px;transform:scaleX(0.8812);">Our Reference:</span>
<div class="sk" style="left:264px;top:160px;width:116px;height:18px;background:#fff"></div>
<span class="t" style="top:188px;font-size:12px;line-height:12px;color:#000;left:9.70px;transform:scaleX(0.8596);">Order Date:</span>
<div class="sk" style="left:87px;top:184px;width:88px;height:19px;background:#fff"></div>
<span class="t" style="top:189px;font-size:12px;line-height:12px;color:#000;left:91.00px;transform:scaleX(0.9156);">17 Feb 2025</span>
<div class="rz" style="left:156px;top:186px;width:17px;height:15px;background:#f0f0f0"></div>
<svg style="left:162px;top:193px" width="5" height="3"><path d="M0 0h5v1h-1v1h-1v1h-1v-1h-1v-1h-1z" fill="#000"/></svg>
<span class="t" style="top:182px;font-size:12px;line-height:12px;color:#000;left:195.70px;transform:scaleX(0.8675);">Delivery</span>
<span class="t" style="top:195px;font-size:12px;line-height:12px;color:#000;left:195.80px;transform:scaleX(0.8546);">Required By:</span>
<div class="sk" style="left:264px;top:184px;width:88px;height:19px;background:#fff"></div>
<span class="t" style="top:189px;font-size:12px;line-height:12px;color:#000;left:268.00px;transform:scaleX(0.9156);">17 Feb 2025</span>
<div class="rz" style="left:333px;top:186px;width:17px;height:15px;background:#f0f0f0"></div>
<svg style="left:339px;top:193px" width="5" height="3"><path d="M0 0h5v1h-1v1h-1v1h-1v-1h-1v-1h-1z" fill="#000"/></svg>
<span class="t" style="top:204px;font-size:12px;line-height:12px;color:#000;left:10.00px;transform:scaleX(0.8734);">Notes:</span>
<div class="sk" style="left:9px;top:218px;width:372px;height:67px;background:#fff"></div>
<span class="t" style="top:222px;font-size:12px;line-height:12px;color:#000;left:12.00px;transform:scaleX(0.8913);">Urgent spelase send asap if possible as needed by latest Thursday 21/02/25</span>
<span class="t" style="top:235px;font-size:12px;line-height:12px;color:#000;left:11.68px;transform:scaleX(0.9159);">. Thanks John</span>
<div style="left:389px;top:87px;width:568px;height:202px;border:1px solid #fff;box-sizing:border-box"></div>
<div style="left:388px;top:86px;width:568px;height:202px;border:1px solid #a0a0a0;box-sizing:border-box"></div>
<div style="left:395px;top:80px;width:103px;height:8px;background:#f0f0f0"></div>
<span class="t" style="top:79px;font-size:14px;line-height:14px;color:#0000dd;font-weight:bold;left:398.00px;transform:scaleX(0.9378);">Delivery Details</span>
<div class="rz" style="left:394px;top:105px;width:104px;height:21px;background:#f0f0f0"></div>
<span class="t" style="top:109px;font-size:12px;line-height:12px;color:#000;left:401.00px;transform:scaleX(0.8679);">Delivery Address ...</span>
<div style="left:400px;top:120px;width:7px;height:1px;background:#000"></div>
<div class="sk" style="left:502px;top:105px;width:191px;height:91px;background:#fff"></div>
<div style="left:676px;top:107px;width:15px;height:87px;background:#f0f0f0"></div>
<svg style="left:680px;top:113px" width="7" height="6" shape-rendering="crispEdges"><rect x="3" y="0" width="1" height="1" fill="#a6a6a6"/><rect x="2" y="1" width="3" height="1" fill="#a6a6a6"/><rect x="1" y="2" width="5" height="1" fill="#a6a6a6"/><rect x="0" y="3" width="3" height="1" fill="#a6a6a6"/><rect x="4" y="3" width="3" height="1" fill="#a6a6a6"/><rect x="0" y="4" width="2" height="1" fill="#a6a6a6"/><rect x="5" y="4" width="2" height="1" fill="#a6a6a6"/><rect x="0" y="5" width="1" height="1" fill="#a6a6a6"/><rect x="6" y="5" width="1" height="1" fill="#a6a6a6"/></svg>
<svg style="left:680px;top:183px" width="7" height="6" shape-rendering="crispEdges"><rect x="0" y="0" width="1" height="1" fill="#a6a6a6"/><rect x="6" y="0" width="1" height="1" fill="#a6a6a6"/><rect x="0" y="1" width="2" height="1" fill="#a6a6a6"/><rect x="5" y="1" width="2" height="1" fill="#a6a6a6"/><rect x="0" y="2" width="3" height="1" fill="#a6a6a6"/><rect x="4" y="2" width="3" height="1" fill="#a6a6a6"/><rect x="1" y="3" width="5" height="1" fill="#a6a6a6"/><rect x="2" y="4" width="3" height="1" fill="#a6a6a6"/><rect x="3" y="5" width="1" height="1" fill="#a6a6a6"/></svg>
<span class="t" style="top:109px;font-size:12px;line-height:12px;color:#000;left:506.00px;transform:scaleX(0.8599);">K3 Exeter Stores</span>
<span class="t" style="top:122px;font-size:12px;line-height:12px;color:#000;left:506.00px;transform:scaleX(0.8687);">EXETER</span>
<span class="t" style="top:135px;font-size:12px;line-height:12px;color:#000;left:506.00px;transform:scaleX(0.9114);">Devon</span>
<span class="t" style="top:148px;font-size:12px;line-height:12px;color:#000;left:506.00px;transform:scaleX(0.8746);">EX5 2FN</span>
<span class="t" style="top:161px;font-size:12px;line-height:12px;color:#000;left:506.00px;transform:scaleX(0.8753);">adam.ayres@k3btg.com</span>
<span class="t" style="top:203px;font-size:12px;line-height:12px;color:#000;left:394.00px;transform:scaleX(0.9023);">Main Telephone No:</span>
<span class="t" style="top:223px;font-size:12px;line-height:12px;color:#000;left:394.00px;transform:scaleX(0.8638);">Fax No:</span>
<span class="t" style="top:242px;font-size:12px;line-height:12px;color:#000;left:394.00px;transform:scaleX(0.8829);">Deliver F.A.O.:</span>
<span class="t" style="top:270px;font-size:12px;line-height:12px;color:#000;left:394.00px;transform:scaleX(0.8569);">Contact E-mail:</span>
<div class="sk" style="left:502px;top:199px;width:192px;height:18px;background:#fff"></div>
<span class="t" style="top:203px;font-size:12px;line-height:12px;color:#000;left:506.00px;transform:scaleX(0.8665);">0800 654321</span>
<div class="sk" style="left:502px;top:219px;width:192px;height:18px;background:#fff"></div>
<span class="t" style="top:223px;font-size:12px;line-height:12px;color:#000;left:506.00px;transform:scaleX(0.8807);">0800 123456</span>
<div class="sk" style="left:502px;top:240px;width:192px;height:18px;background:#fff"></div>
<span class="t" style="top:244px;font-size:12px;line-height:12px;color:#000;left:505.00px;transform:scaleX(0.8761);">John Smith</span>
<div class="sk" style="left:502px;top:265px;width:192px;height:18px;background:#fff"></div>
<span class="t" style="top:269px;font-size:12px;line-height:12px;color:#000;left:506.00px;transform:scaleX(0.8720);">storeroom@k3btg.com</span>
<span class="t" style="top:91px;font-size:12px;line-height:12px;color:#000;left:713.00px;transform:scaleX(0.8823);">Warehouse Notes:</span>
<div class="sk" style="left:712px;top:105px;width:237px;height:108px;background:#fff"></div>
<span class="t" style="top:109px;font-size:12px;line-height:12px;color:#000;left:715.11px;transform:scaleX(0.8935);">Internal Notes: we have about 4 days stock left</span>
<span class="t" style="top:122px;font-size:12px;line-height:12px;color:#000;left:716.00px;transform:scaleX(0.8864);">currently. Please chase Wednesday and if not</span>
<span class="t" style="top:135px;font-size:12px;line-height:12px;color:#000;left:716.00px;transform:scaleX(0.8790);">guarenteed for Thursday please get alternative</span>
<span class="t" style="top:148px;font-size:12px;line-height:12px;color:#000;left:716.00px;transform:scaleX(0.8506);">supplies.</span>
<span class="t" style="top:217px;font-size:12px;line-height:12px;color:#000;left:773.70px;transform:scaleX(0.8767);">Show sales</span>
<span class="t" style="top:230px;font-size:12px;line-height:12px;color:#000;left:799.60px;transform:scaleX(0.8288);">for last</span>
<div class="sk" style="left:835px;top:222px;width:60px;height:20px;background:#fff"></div>
<div class="rz" style="left:877px;top:224px;width:17px;height:16px;background:#f0f0f0"></div>
<svg style="left:882px;top:230px" width="7" height="4"><path d="M0 0h7v1h-1v1h-1v1h-1v1h-1v-1h-1v-1h-1v-1h-1z" fill="#000"/></svg>
<span class="t" style="top:227px;font-size:12px;line-height:12px;color:#000;left:839.00px;transform:scaleX(0.8776);">14</span>
<span class="t" style="top:226px;font-size:12px;line-height:12px;color:#000;left:899.00px;transform:scaleX(0.8679);">days</span>
<span class="t" style="top:250px;font-size:12px;line-height:12px;color:#000;left:734.00px;transform:scaleX(0.8830);">Reason code for Breakages:</span>
<div class="sk" style="left:733px;top:265px;width:174px;height:20px;background:#fff"></div>
<div class="rz" style="left:889px;top:267px;width:17px;height:16px;background:#f0f0f0"></div>
<svg style="left:894px;top:273px" width="7" height="4"><path d="M0 0h7v1h-1v1h-1v1h-1v1h-1v-1h-1v-1h-1v-1h-1z" fill="#000"/></svg>
<span class="t" style="top:269px;font-size:12px;line-height:12px;color:#000;left:737.00px;transform:scaleX(0.8818);">Damaged Goods</span>
<div class="rz" style="left:910px;top:264px;width:22px;height:21px;background:#f0f0f0"></div>
<svg style="left:913px;top:268px" width="17" height="11" shape-rendering="crispEdges"><rect x="5" y="0" width="1" height="1" fill="#000"/><rect x="4" y="1" width="1" height="1" fill="#000"/><rect x="6" y="1" width="1" height="1" fill="#000"/><rect x="14" y="1" width="1" height="1" fill="#000"/><rect x="3" y="2" width="1" height="1" fill="#000"/><rect x="6" y="2" width="1" height="1" fill="#000"/><rect x="13" y="2" width="1" height="1" fill="#000"/><rect x="15" y="2" width="1" height="1" fill="#000"/><rect x="2" y="3" width="1" height="1" fill="#000"/><rect x="6" y="3" width="1" height="1" fill="#000"/><rect x="12" y="3" width="1" height="1" fill="#000"/><rect x="15" y="3" width="1" height="1" fill="#000"/><rect x="1" y="4" width="1" height="1" fill="#000"/><rect x="11" y="4" width="1" height="1" fill="#000"/><rect x="15" y="4" width="1" height="1" fill="#000"/><rect x="1" y="5" width="11" height="1" fill="#000"/><rect x="0" y="6" width="1" height="1" fill="#000"/><rect x="1" y="6" width="3" height="1" fill="#00e0e0"/><rect x="4" y="6" width="2" height="1" fill="#000"/><rect x="7" y="6" width="1" height="1" fill="#000"/><rect x="8" y="6" width="3" height="1" fill="#00e0e0"/><rect x="11" y="6" width="1" height="1" fill="#000"/><rect x="0" y="7" width="1" height="1" fill="#000"/><rect x="1" y="7" width="1" height="1" fill="#00e0e0"/><rect x="2" y="7" width="1" height="1" fill="#000"/><rect x="3" y="7" width="1" height="1" fill="#00e0e0"/><rect x="4" y="7" width="1" height="1" fill="#000"/><rect x="7" y="7" width="1" height="1" fill="#000"/><rect x="8" y="7" width="1" height="1" fill="#00e0e0"/><rect x="9" y="7" width="1" height="1" fill="#000"/><rect x="10" y="7" width="1" height="1" fill="#00e0e0"/><rect x="11" y="7" width="1" height="1" fill="#000"/><rect x="0" y="8" width="1" height="1" fill="#000"/><rect x="1" y="8" width="1" height="1" fill="#00e0e0"/><rect x="2" y="8" width="1" height="1" fill="#000"/><rect x="3" y="8" width="1" height="1" fill="#00e0e0"/><rect x="4" y="8" width="1" height="1" fill="#000"/><rect x="7" y="8" width="1" height="1" fill="#000"/><rect x="8" y="8" width="1" height="1" fill="#00e0e0"/><rect x="9" y="8" width="1" height="1" fill="#000"/><rect x="10" y="8" width="1" height="1" fill="#00e0e0"/><rect x="11" y="8" width="1" height="1" fill="#000"/><rect x="0" y="9" width="1" height="1" fill="#000"/><rect x="1" y="9" width="3" height="1" fill="#00e0e0"/><rect x="4" y="9" width="1" height="1" fill="#000"/><rect x="7" y="9" width="1" height="1" fill="#000"/><rect x="8" y="9" width="3" height="1" fill="#00e0e0"/><rect x="11" y="9" width="1" height="1" fill="#000"/><rect x="1" y="10" width="3" height="1" fill="#000"/><rect x="8" y="10" width="3" height="1" fill="#000"/></svg>
<div style="left:2px;top:300px;width:954px;height:366px;border:1px solid #fff;box-sizing:border-box"></div>
<div style="left:1px;top:299px;width:954px;height:366px;border:1px solid #a0a0a0;box-sizing:border-box"></div>
<div style="left:9px;top:293px;width:93px;height:8px;background:#f0f0f0"></div>
<span class="t" style="top:292px;font-size:14px;line-height:14px;color:#0000dd;font-weight:bold;left:11.00px;transform:scaleX(0.9248);">Items to Order</span>
<div class="rz" style="left:127px;top:288px;width:127px;height:22px;background:#f0f0f0"></div>
<span class="t" style="top:293px;font-size:12px;line-height:12px;color:#0000d0;left:141.00px;transform:scaleX(0.8850);">Set to Barcode order</span>
<span class="t" style="top:316px;font-size:11px;line-height:11px;color:#000;font-weight:bold;left:37.10px;transform:scaleX(1.0335);">Code</span>
<span class="t" style="top:316px;font-size:11px;line-height:11px;color:#000;font-weight:bold;left:185.40px;transform:scaleX(1.0199);">Description</span>
<span class="t" style="top:316px;font-size:11px;line-height:11px;color:#000;font-weight:bold;left:337.00px;transform:scaleX(0.9914);">Sales Suffix</span>
<span class="t" style="top:316px;font-size:11px;line-height:11px;color:#000;font-weight:bold;left:457.40px;transform:scaleX(0.9485);">Unit</span>
<span class="t" style="top:302px;font-size:11px;line-height:11px;color:#000;font-weight:bold;left:486.30px;transform:scaleX(1.0032);">Sold Last</span>
<span class="t" style="top:316px;font-size:11px;line-height:11px;color:#000;font-weight:bold;left:492.50px;transform:scaleX(0.9939);height:9px;overflow:hidden;">14 days</span>
<span class="t" style="top:303px;font-size:11px;line-height:11px;color:#000;font-weight:bold;left:550.20px;transform:scaleX(0.9603);">Qty In</span>
<span class="t" style="top:317px;font-size:11px;line-height:11px;color:#000;font-weight:bold;left:553.10px;transform:scaleX(0.9534);">Stock</span>
<span class="t" style="top:303px;font-size:11px;line-height:11px;color:#000;font-weight:bold;left:598.00px;transform:scaleX(0.9504);">Qty On*</span>
<span class="t" style="top:317px;font-size:11px;line-height:11px;color:#000;font-weight:bold;left:603.30px;transform:scaleX(1.0335);">Order</span>
<span class="t" style="top:303px;font-size:11px;line-height:11px;color:#000;font-weight:bold;left:656.10px;transform:scaleX(0.9210);">Qty</span>
<span class="t" style="top:317px;font-size:11px;line-height:11px;color:#000;font-weight:bold;left:644.40px;transform:scaleX(1.0577);">Ordered</span>
<span class="t" style="top:303px;font-size:11px;line-height:11px;color:#000;font-weight:bold;left:695.70px;transform:scaleX(1.0071);">Rec'd</span>
<span class="t" style="top:317px;font-size:11px;line-height:11px;color:#000;font-weight:bold;left:695.20px;transform:scaleX(0.9213);">So Far</span>
<span class="t" style="top:302px;font-size:11px;line-height:11px;color:#000;font-weight:bold;left:745.10px;transform:scaleX(0.9764);">Qty to</span>
<span class="t" style="top:316px;font-size:11px;line-height:11px;color:#000;font-weight:bold;left:745.10px;transform:scaleX(0.9796);">Rec've</span>
<span class="t" style="top:302px;font-size:11px;line-height:11px;color:#000;font-weight:bold;left:787.30px;transform:scaleX(1.0248);">of which</span>
<span class="t" style="top:316px;font-size:11px;line-height:11px;color:#000;font-weight:bold;left:787.30px;transform:scaleX(1.0662);">broken</span>
<span class="t" style="top:303px;font-size:11px;line-height:11px;color:#000;font-weight:bold;left:839.80px;transform:scaleX(1.0386);">Latest</span>
<span class="t" style="top:317px;font-size:11px;line-height:11px;color:#000;font-weight:bold;left:845.20px;transform:scaleX(1.0492);">Cost</span>
<div class="sk" style="left:7px;top:329px;width:131px;height:18px;background:#fff"></div>
<div class="rz" style="left:137px;top:330px;width:22px;height:20px;background:linear-gradient(180deg,#e2e2e2,#bcbcbc);border-color:#200 #200 #200 #200;box-shadow:inset 1px 1px 0 #fff,inset -1px -1px 0 #a0a0a0;"></div><svg style="left:140px;top:333px" width="16" height="13" shape-rendering="crispEdges"><rect x="3" y="0" width="3" height="1" fill="#000"/><rect x="9" y="0" width="3" height="1" fill="#000"/><rect x="2" y="1" width="2" height="1" fill="#000"/><rect x="4" y="1" width="1" height="1" fill="#808080"/><rect x="5" y="1" width="2" height="1" fill="#000"/><rect x="8" y="1" width="2" height="1" fill="#000"/><rect x="10" y="1" width="1" height="1" fill="#808080"/><rect x="11" y="1" width="2" height="1" fill="#000"/><rect x="14" y="1" width="1" height="1" fill="#000"/><rect x="1" y="2" width="1" height="1" fill="#000"/><rect x="3" y="2" width="3" height="1" fill="#000"/><rect x="7" y="2" width="1" height="1" fill="#fff"/><rect x="9" y="2" width="3" height="1" fill="#000"/><rect x="2" y="3" width="5" height="1" fill="#000"/><rect x="8" y="3" width="5" height="1" fill="#000"/><rect x="14" y="3" width="1" height="1" fill="#000"/><rect x="2" y="4" width="2" height="1" fill="#000"/><rect x="4" y="4" width="1" height="1" fill="#fff"/><rect x="5" y="4" width="4" height="1" fill="#000"/><rect x="9" y="4" width="1" height="1" fill="#fff"/><rect x="10" y="4" width="4" height="1" fill="#000"/><rect x="1" y="5" width="14" height="1" fill="#000"/><rect x="0" y="6" width="1" height="1" fill="#000"/><rect x="1" y="6" width="2" height="1" fill="#fff"/><rect x="3" y="6" width="2" height="1" fill="#000"/><rect x="5" y="6" width="1" height="1" fill="#fff"/><rect x="6" y="6" width="3" height="1" fill="#000"/><rect x="9" y="6" width="1" height="1" fill="#fff"/><rect x="10" y="6" width="5" height="1" fill="#000"/><rect x="0" y="7" width="1" height="1" fill="#000"/><rect x="1" y="7" width="1" height="1" fill="#fff"/><rect x="2" y="7" width="3" height="1" fill="#000"/><rect x="5" y="7" width="1" height="1" fill="#fff"/><rect x="6" y="7" width="3" height="1" fill="#000"/><rect x="9" y="7" width="1" height="1" fill="#fff"/><rect x="10" y="7" width="4" height="1" fill="#000"/><rect x="0" y="8" width="1" height="1" fill="#000"/><rect x="1" y="8" width="2" height="1" fill="#fff"/><rect x="3" y="8" width="6" height="1" fill="#000"/><rect x="9" y="8" width="1" height="1" fill="#fff"/><rect x="10" y="8" width="5" height="1" fill="#000"/><rect x="0" y="9" width="6" height="1" fill="#000"/><rect x="7" y="9" width="1" height="1" fill="#fff"/><rect x="9" y="9" width="5" height="1" fill="#000"/><rect x="0" y="10" width="5" height="1" fill="#000"/><rect x="9" y="10" width="6" height="1" fill="#000"/><rect x="0" y="11" width="1" height="1" fill="#000"/><rect x="1" y="11" width="1" height="1" fill="#fff"/><rect x="2" y="11" width="2" height="1" fill="#000"/><rect x="6" y="11" width="1" height="1" fill="#fff"/><rect x="9" y="11" width="2" height="1" fill="#000"/><rect x="11" y="11" width="1" height="1" fill="#fff"/><rect x="12" y="11" width="2" height="1" fill="#000"/><rect x="0" y="12" width="1" height="1" fill="#000"/><rect x="2" y="12" width="1" height="1" fill="#000"/><rect x="4" y="12" width="1" height="1" fill="#000"/><rect x="7" y="12" width="1" height="1" fill="#000"/><rect x="9" y="12" width="1" height="1" fill="#000"/><rect x="11" y="12" width="1" height="1" fill="#000"/><rect x="14" y="12" width="1" height="1" fill="#000"/></svg>
<div class="sk" style="left:161px;top:329px;width:166px;height:18px;background:#dfdfdf"></div>
<div class="sk" style="left:328px;top:329px;width:104px;height:18px;background:#dfdfdf"></div>
<div class="sk" style="left:433px;top:329px;width:65px;height:20px;background:#fff"></div>
<div class="rz" style="left:480px;top:331px;width:17px;height:16px;background:#f0f0f0"></div>
<svg style="left:485px;top:337px" width="7" height="4"><path d="M0 0h7v1h-1v1h-1v1h-1v1h-1v-1h-1v-1h-1v-1h-1z" fill="#000"/></svg>
<div class="sk" style="left:500px;top:329px;width:46px;height:18px;background:#dfdfdf"></div>
<div class="sk" style="left:548px;top:329px;width:46px;height:18px;background:#dfdfdf"></div>
<div class="sk" style="left:596px;top:329px;width:46px;height:18px;background:#dfdfdf"></div>
<div class="sk" style="left:643px;top:329px;width:46px;height:18px;background:#fff"></div>
<div class="sk" style="left:691px;top:329px;width:46px;height:18px;background:#dfdfdf"></div>
<div class="sk" style="left:739px;top:329px;width:46px;height:18px;background:#dfdfdf"></div>
<div class="sk" style="left:787px;top:329px;width:46px;height:18px;background:#dfdfdf"></div>
<div class="sk" style="left:834px;top:329px;width:46px;height:18px;background:#fff"></div>
<div class="rz" style="left:901px;top:327px;width:22px;height:21px;background:#f0f0f0"></div>
<svg style="left:904px;top:330px" width="16" height="15"><path d="M2 8L6 12L14 2" stroke="#000" stroke-width="2" fill="none"/></svg>
<div class="rz" style="left:929px;top:327px;width:22px;height:21px;background:#f0f0f0"></div>
<svg style="left:933px;top:330px" width="14" height="14"><path d="M1.5 1.5L12.5 12.5M12.5 1.5L1.5 12.5" stroke="#000" stroke-width="2" fill="none"/></svg>
<span class="t" style="top:353px;font-size:12px;line-height:12px;color:#000;left:17.00px;transform:scaleX(0.8503);">Suppliers Item Code:</span>
<div class="sk" style="left:115px;top:351px;width:121px;height:17px;background:#fff"></div>
<span class="t" style="top:354px;font-size:12px;line-height:12px;color:#000;left:250.50px;transform:scaleX(0.8854);">Note:</span>
<div class="sk" style="left:280px;top:349px;width:282px;height:17px;background:#fff"></div>
<span class="t" style="top:373px;font-size:12px;line-height:12px;color:#000;left:210.40px;transform:scaleX(0.8967);">Internal Note:</span>
<div class="sk" style="left:280px;top:370px;width:282px;height:17px;background:#fff"></div>
<span class="t" style="top:355px;font-size:12px;line-height:12px;color:#000;left:591.70px;transform:scaleX(0.8722);">Packsize:</span>
<div class="sk" style="left:643px;top:351px;width:46px;height:18px;background:#dfdfdf"></div>
<div class="rz" style="left:772px;top:351px;width:80px;height:21px;background:#f0f0f0"></div>
<span class="t" style="top:355px;font-size:12px;line-height:12px;color:#a0a0a0;left:792.50px;transform:scaleX(0.9112);text-shadow:1px 1px 0 #fff">Receive</span>
<div style="left:793px;top:366px;width:7px;height:1px;background:#a0a0a0;box-shadow:1px 1px 0 #fff"></div>
<div class="rz" style="left:868px;top:351px;width:82px;height:21px;background:#f0f0f0"></div>
<span class="t" style="top:355px;font-size:12px;line-height:12px;color:#a0a0a0;left:882.00px;transform:scaleX(0.8681);text-shadow:1px 1px 0 #fff">Cancel Line</span>
<div style="left:917px;top:366px;width:6px;height:1px;background:#a0a0a0;box-shadow:1px 1px 0 #fff"></div>
<div class="sk" style="left:5px;top:394px;width:946px;height:181px;background:#808080"></div>
<div style="left:7px;top:396px;width:916px;height:16px;background:#ffff00;border-right:1px solid #000;border-bottom:1px solid #000;box-sizing:border-box"></div>
<div style="left:139px;top:396px;width:1px;height:15px;background:#c8c8c8"></div>
<div style="left:329px;top:396px;width:1px;height:15px;background:#c8c8c8"></div>
<div style="left:433px;top:396px;width:1px;height:15px;background:#c8c8c8"></div>
<div style="left:499px;top:396px;width:1px;height:15px;background:#c8c8c8"></div>
<div style="left:546px;top:396px;width:1px;height:15px;background:#c8c8c8"></div>
<div style="left:593px;top:396px;width:1px;height:15px;background:#c8c8c8"></div>
<div style="left:640px;top:396px;width:1px;height:15px;background:#c8c8c8"></div>
<div style="left:687px;top:396px;width:1px;height:15px;background:#c8c8c8"></div>
<div style="left:734px;top:396px;width:1px;height:15px;background:#c8c8c8"></div>
<div style="left:781px;top:396px;width:1px;height:15px;background:#c8c8c8"></div>
<div style="left:828px;top:396px;width:1px;height:15px;background:#c8c8c8"></div>
<div style="left:875px;top:396px;width:1px;height:15px;background:#c8c8c8"></div>
<span class="t" style="top:580px;font-size:12px;line-height:12px;color:#000;left:8.00px;transform:scaleX(0.7972);">Find:</span>
<div class="sk" style="left:34px;top:576px;width:222px;height:18px;background:#fff"></div>
<div class="rz" style="left:256px;top:576px;width:19px;height:19px;background:linear-gradient(180deg,#e2e2e2,#bcbcbc);"></div><svg style="left:258px;top:579px" width="15" height="13" shape-rendering="crispEdges"><rect x="3" y="0" width="3" height="1" fill="#000"/><rect x="9" y="0" width="3" height="1" fill="#000"/><rect x="3" y="1" width="1" height="1" fill="#000"/><rect x="4" y="1" width="1" height="1" fill="#fff"/><rect x="5" y="1" width="1" height="1" fill="#000"/><rect x="9" y="1" width="1" height="1" fill="#000"/><rect x="10" y="1" width="1" height="1" fill="#fff"/><rect x="11" y="1" width="1" height="1" fill="#000"/><rect x="3" y="2" width="3" height="1" fill="#000"/><rect x="9" y="2" width="3" height="1" fill="#000"/><rect x="2" y="3" width="5" height="1" fill="#000"/><rect x="8" y="3" width="5" height="1" fill="#000"/><rect x="2" y="4" width="1" height="1" fill="#000"/><rect x="3" y="4" width="1" height="1" fill="#fff"/><rect x="4" y="4" width="5" height="1" fill="#000"/><rect x="9" y="4" width="1" height="1" fill="#fff"/><rect x="10" y="4" width="3" height="1" fill="#000"/><rect x="0" y="5" width="15" height="1" fill="#000"/><rect x="0" y="6" width="2" height="1" fill="#000"/><rect x="2" y="6" width="1" height="1" fill="#fff"/><rect x="3" y="6" width="2" height="1" fill="#000"/><rect x="5" y="6" width="1" height="1" fill="#fff"/><rect x="6" y="6" width="3" height="1" fill="#000"/><rect x="9" y="6" width="1" height="1" fill="#fff"/><rect x="10" y="6" width="5" height="1" fill="#000"/><rect x="0" y="7" width="2" height="1" fill="#000"/><rect x="2" y="7" width="1" height="1" fill="#fff"/><rect x="3" y="7" width="2" height="1" fill="#000"/><rect x="5" y="7" width="1" height="1" fill="#fff"/><rect x="6" y="7" width="3" height="1" fill="#000"/><rect x="9" y="7" width="1" height="1" fill="#fff"/><rect x="10" y="7" width="5" height="1" fill="#000"/><rect x="0" y="8" width="15" height="1" fill="#000"/><rect x="0" y="9" width="5" height="1" fill="#000"/><rect x="10" y="9" width="5" height="1" fill="#000"/><rect x="0" y="10" width="1" height="1" fill="#000"/><rect x="1" y="10" width="1" height="1" fill="#fff"/><rect x="2" y="10" width="3" height="1" fill="#000"/><rect x="10" y="10" width="2" height="1" fill="#000"/><rect x="12" y="10" width="1" height="1" fill="#fff"/><rect x="13" y="10" width="2" height="1" fill="#000"/><rect x="0" y="11" width="1" height="1" fill="#000"/><rect x="1" y="11" width="1" height="1" fill="#fff"/><rect x="2" y="11" width="3" height="1" fill="#000"/><rect x="10" y="11" width="2" height="1" fill="#000"/><rect x="12" y="11" width="1" height="1" fill="#fff"/><rect x="13" y="11" width="2" height="1" fill="#000"/><rect x="0" y="12" width="5" height="1" fill="#000"/><rect x="10" y="12" width="5" height="1" fill="#000"/></svg>
<span class="t" style="top:597px;font-size:12px;line-height:12px;color:#000;left:6.00px;transform:scaleX(0.8588);">Order Status:</span>
<span class="t" style="top:598px;font-size:11px;line-height:11px;color:#ff0000;font-weight:bold;left:71.00px;transform:scaleX(1.0521);">Order not saved</span>
<div class="rz" style="left:325px;top:594px;width:70px;height:22px;background:#f0f0f0"></div>
<span class="t" style="top:599px;font-size:12px;line-height:12px;color:#000;left:343.60px;transform:scaleX(0.8917);">Unlock</span>
<div class="sk" style="left:427px;top:598px;width:13px;height:13px;background:#fff"></div>
<span class="t" style="top:599px;font-size:11px;line-height:11px;color:#000;font-weight:bold;left:446.00px;transform:scaleX(1.0424);">Show completed/cancelled lines.</span>
<span class="t" style="top:583px;font-size:12px;line-height:12px;color:#000;left:743.00px;transform:scaleX(0.8742);">Total Order Cost:</span>
<div class="sk" style="left:831px;top:579px;width:63px;height:18px;background:#dfdfdf"></div>
<span class="t" style="top:604px;font-size:12px;line-height:12px;color:#000;left:741.00px;transform:scaleX(0.8963);">Received so Far:</span>
<div class="sk" style="left:831px;top:600px;width:63px;height:18px;background:#dfdfdf"></div>
<span class="t" style="top:625px;font-size:12px;line-height:12px;color:#000;left:773.00px;transform:scaleX(0.8904);">Damaged:</span>
<div class="sk" style="left:831px;top:621px;width:63px;height:18px;background:#dfdfdf"></div>
<span class="t" style="top:646px;font-size:12px;line-height:12px;color:#000;left:763.00px;transform:scaleX(0.8714);">Outstanding:</span>
<div class="sk" style="left:831px;top:642px;width:63px;height:18px;background:#dfdfdf"></div>
<div class="rz" style="left:43px;top:669px;width:88px;height:25px;background:#f0f0f0"></div>
<span class="t" style="top:675px;font-size:12px;line-height:12px;color:#000;left:52.00px;transform:scaleX(0.8803);">Auto Generate</span>
<div style="left:77px;top:686px;width:8px;height:1px;background:#000"></div>
<div class="rz" style="left:133px;top:669px;width:88px;height:25px;background:#f0f0f0"></div>
<span class="t" style="top:675px;font-size:12px;line-height:12px;color:#a0a0a0;left:146.00px;transform:scaleX(0.8688);text-shadow:1px 1px 0 #fff">Cancel Order</span>
<div style="left:182px;top:686px;width:7px;height:1px;background:#a0a0a0;box-shadow:1px 1px 0 #fff"></div>
<div class="rz" style="left:223px;top:669px;width:88px;height:25px;background:#f0f0f0"></div>
<span class="t" style="top:675px;font-size:12px;line-height:12px;color:#a0a0a0;left:239.00px;transform:scaleX(0.9266);text-shadow:1px 1px 0 #fff">Receive All</span>
<div style="left:284px;top:686px;width:6px;height:1px;background:#a0a0a0;box-shadow:1px 1px 0 #fff"></div>
<div class="rz" style="left:313px;top:669px;width:88px;height:25px;background:#f0f0f0"></div>
<span class="t" style="top:675px;font-size:12px;line-height:12px;color:#a0a0a0;left:320.00px;transform:scaleX(0.8971);text-shadow:1px 1px 0 #fff">Set as Invoiced</span>
<div style="left:353px;top:686px;width:3px;height:1px;background:#a0a0a0;box-shadow:1px 1px 0 #fff"></div>
<div class="rz" style="left:403px;top:669px;width:88px;height:25px;background:#f0f0f0"></div>
<span class="t" style="top:675px;font-size:12px;line-height:12px;color:#a0a0a0;left:420.00px;transform:scaleX(0.8772);text-shadow:1px 1px 0 #fff">Undo Order</span>
<div class="rz" style="left:518px;top:669px;width:69px;height:25px;background:#f0f0f0"></div>
<span class="t" style="top:675px;font-size:12px;line-height:12px;color:#000;left:540.00px;transform:scaleX(0.9033);">Save</span>
<div style="left:540px;top:686px;width:7px;height:1px;background:#000"></div>
<div class="rz" style="left:589px;top:669px;width:69px;height:25px;background:#f0f0f0"></div>
<span class="t" style="top:675px;font-size:12px;line-height:12px;color:#000;left:608.00px;transform:scaleX(0.8722);">Cancel</span>
<div style="left:608px;top:686px;width:7px;height:1px;background:#000"></div>
<div class="rz" style="left:666px;top:669px;width:69px;height:25px;background:#f0f0f0"></div>
<span class="t" style="top:675px;font-size:12px;line-height:12px;color:#a0a0a0;left:688.00px;transform:scaleX(0.8521);text-shadow:1px 1px 0 #fff">Email</span>
<div style="left:688px;top:686px;width:6px;height:1px;background:#a0a0a0;box-shadow:1px 1px 0 #fff"></div>
<div class="rz" style="left:739px;top:669px;width:69px;height:25px;background:#f0f0f0"></div>
<span class="t" style="top:675px;font-size:12px;line-height:12px;color:#a0a0a0;left:763.00px;transform:scaleX(0.8287);text-shadow:1px 1px 0 #fff">Print</span>
<div style="left:763px;top:686px;width:6px;height:1px;background:#a0a0a0;box-shadow:1px 1px 0 #fff"></div>
<div class="rz" style="left:810px;top:669px;width:69px;height:25px;background:#f0f0f0"></div>
<span class="t" style="top:675px;font-size:12px;line-height:12px;color:#000;left:832.00px;transform:scaleX(0.8063);">Close</span>
<div style="left:838px;top:686px;width:2px;height:1px;background:#000"></div>
<div class="rz" style="left:882px;top:669px;width:69px;height:25px;background:#f0f0f0"></div>
<span class="t" style="top:675px;font-size:12px;line-height:12px;color:#000;left:905.00px;transform:scaleX(0.8798);">Help</span>
<div style="left:905px;top:686px;width:7px;height:1px;background:#000"></div>
<div style="left:377px;top:63px;width:329px;height:231px;border:5px solid #ed1c24;box-sizing:border-box"></div></body></html>
